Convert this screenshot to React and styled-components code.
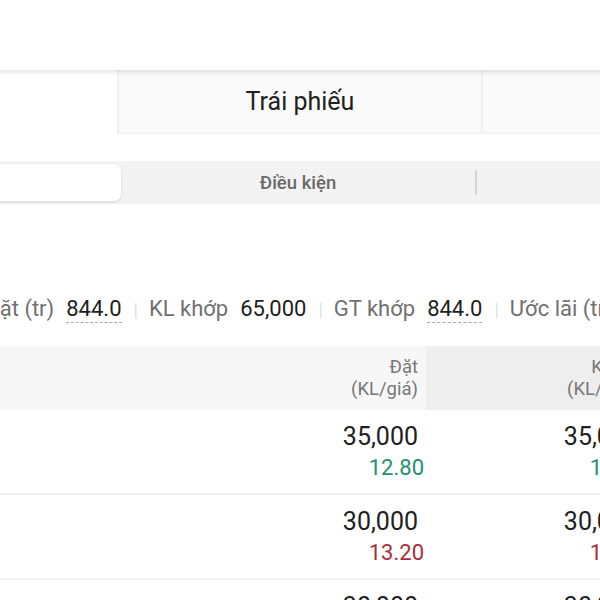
import React from "react";
import styled, { createGlobalStyle } from "styled-components";

const GlobalStyle = createGlobalStyle`
  html, body {
    margin: 0;
    padding: 0;
    background: #ffffff;
    overflow: hidden;
  }
  body {
    font-family: Roboto, "Noto Sans", "Liberation Sans", sans-serif;
    color: #212121;
  }
`;

const Viewport = styled.div`
  width: 600px;
  height: 600px;
  overflow: hidden;
`;

const Page = styled.div`
  width: 1092px;
  margin-left: -247px;
`;

const Header = styled.div`
  height: 70px;
  background: #ffffff;
  box-shadow: 0 2px 5px rgba(0, 0, 0, 0.12);
  position: relative;
  z-index: 1;
`;

const Tabs = styled.div`
  display: grid;
  grid-template-columns: repeat(3, 364px);
  height: 64px;
`;

const Tab = styled.div`
  display: flex;
  align-items: center;
  justify-content: center;
  font-size: 25px;
  color: #212121;
  background: ${(p) => (p.$active ? "#ffffff" : "#fafafa")};
  border-left: ${(p) => (p.$active ? "none" : "2px solid #f0f0f0")};
  border-bottom: ${(p) => (p.$active ? "none" : "2px solid #f3f3f3")};
`;

const Segmented = styled.div`
  margin: 27px 12px 0;
  height: 43px;
  background: #f3f3f3;
  border-radius: 4px;
  display: grid;
  grid-template-columns: repeat(3, 1fr);
  padding: 3px 0;
  box-sizing: border-box;
`;

const Segment = styled.div`
  display: flex;
  align-items: center;
  justify-content: center;
  font-size: 18.5px;
  font-weight: 500;
  color: #6a6a6a;
  background: ${(p) => (p.$active ? "#ffffff" : "transparent")};
  box-shadow: ${(p) => (p.$active ? "0 1px 3px rgba(0,0,0,0.14)" : "none")};
  border-right: ${(p) => (p.$divider ? "2px solid #d6d6d6" : "none")};
  border-radius: ${(p) => (p.$divider ? "0" : "7px")};
  margin: ${(p) => (p.$divider ? "6px 0" : "0")};
`;

const Stats = styled.div`
  margin-top: 92px;
  padding-left: 232px;
  display: flex;
  align-items: baseline;
  white-space: nowrap;
  font-size: 22px;
  line-height: 26px;
`;

const StatLabel = styled.span`
  color: #707070;
`;

const StatValue = styled.span`
  color: #1e1e1e;
  margin-left: 12px;
  border-bottom: ${(p) => (p.$dashed ? "1px dashed #aaaaaa" : "1px solid transparent")};
`;

const StatSep = styled.span`
  color: #e0e0e0;
  margin: 0 11px 0 12px;
  font-size: 18px;
`;

const Table = styled.div`
  margin-top: 23px;
  display: grid;
  grid-template-columns: 453px 220px 221px 1fr;
`;

const HeadCell = styled.div`
  height: 64px;
  background: ${(p) => (p.$shade ? "#eeeeee" : "#f7f7f7")};
  display: flex;
  flex-direction: column;
  justify-content: center;
  align-items: flex-end;
  padding-right: ${(p) => (p.$shade ? "13px" : "8px")};
  font-size: 18.5px;
  line-height: 22px;
  color: #777777;
`;

const Cell = styled.div`
  height: 85px;
  box-sizing: border-box;
  border-bottom: 2px solid #f1f1f1;
  display: flex;
  flex-direction: column;
  align-items: flex-end;
  padding: 12px 8px 0 0;
`;

const Qty = styled.div`
  font-size: 25px;
  line-height: 30px;
  color: #212121;
`;

const Price = styled.div`
  font-size: 22px;
  line-height: 26px;
  margin-top: 3px;
  margin-right: -6px;
  color: ${(p) => (p.$up ? "#23906d" : "#a52f3b")};
`;

const rows = [
  { order: "35,000", orderPrice: "12.80", match: "35,000", matchPrice: "12.80", up: true },
  { order: "30,000", orderPrice: "13.20", match: "30,000", matchPrice: "13.20", up: false },
  { order: "30,000", orderPrice: "13.20", match: "30,000", matchPrice: "13.20", up: false },
];

export default function App() {
  return (
    <Viewport>
      <GlobalStyle />
      <Page>
        <Header />
        <Tabs>
          <Tab $active>Cổ phiếu</Tab>
          <Tab>Trái phiếu</Tab>
          <Tab>Phái sinh</Tab>
        </Tabs>
        <Segmented>
          <Segment $active>Thường</Segment>
          <Segment $divider>Điều kiện</Segment>
          <Segment>Lịch sử</Segment>
        </Segmented>
        <Stats>
          <StatLabel>Đặt (tr)</StatLabel>
          <StatValue $dashed>844.0</StatValue>
          <StatSep>|</StatSep>
          <StatLabel>KL khớp</StatLabel>
          <StatValue>65,000</StatValue>
          <StatSep>|</StatSep>
          <StatLabel>GT khớp</StatLabel>
          <StatValue $dashed>844.0</StatValue>
          <StatSep>|</StatSep>
          <StatLabel>Ước lãi (tr)</StatLabel>
          <StatValue $dashed>12.5</StatValue>
        </Stats>
        <Table>
          <HeadCell />
          <HeadCell>
            <span>Đặt</span>
            <span>(KL/giá)</span>
          </HeadCell>
          <HeadCell $shade>
            <span>Khớp</span>
            <span>(KL/giá)</span>
          </HeadCell>
          <HeadCell />
          {rows.map((r, i) => (
            <React.Fragment key={i}>
              <Cell />
              <Cell>
                <Qty>{r.order}</Qty>
                <Price $up={r.up}>{r.orderPrice}</Price>
              </Cell>
              <Cell>
                <Qty>{r.match}</Qty>
                <Price $up={r.up}>{r.matchPrice}</Price>
              </Cell>
              <Cell />
            </React.Fragment>
          ))}
        </Table>
      </Page>
    </Viewport>
  );
}
